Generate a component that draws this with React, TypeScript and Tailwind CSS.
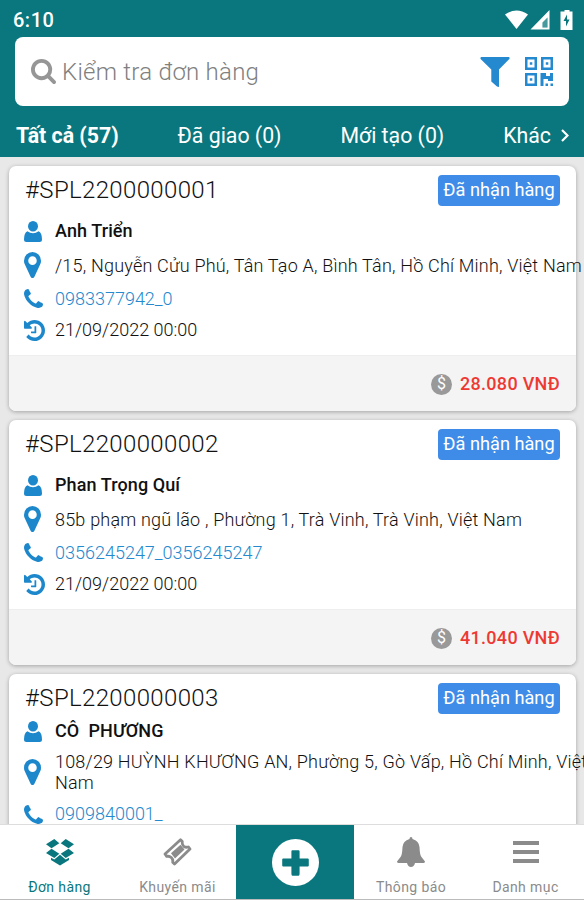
import type { ReactNode } from 'react'

type Order = {
  code: string
  name: string
  address: string
  phone: string
  time: string
  price: string
  compact?: boolean
}

const ORDERS: Order[] = [
  {
    code: '#SPL2200000001',
    name: 'Anh Triển',
    address: '/15, Nguyễn Cửu Phú, Tân Tạo A, Bình Tân, Hồ Chí Minh, Việt Nam',
    phone: '0983377942_0',
    time: '21/09/2022 00:00',
    price: '28.080 VNĐ',
  },
  {
    code: '#SPL2200000002',
    name: 'Phan Trọng Quí',
    address: '85b phạm ngũ lão , Phường 1, Trà Vinh, Trà Vinh, Việt Nam',
    phone: '0356245247_0356245247',
    time: '21/09/2022 00:00',
    price: '41.040 VNĐ',
  },
  {
    code: '#SPL2200000003',
    name: 'CÔ  PHƯƠNG',
    address: '108/29 HUỲNH KHƯƠNG AN, Phường 5, Gò Vấp, Hồ Chí Minh, Việt\nNam',
    phone: '0909840001_',
    time: '',
    price: '',
    compact: true,
  },
]

// glyphs on a 1792 grid
const GLYPHS = {
  search:
    'M1216 832q0-185-131.5-316.5t-316.5-131.5-316.5 131.5-131.5 316.5 131.5 316.5 316.5 131.5 316.5-131.5 131.5-316.5zm512 832q0 52-38 90t-90 38q-54 0-90-38l-343-342q-179 124-399 124-143 0-273.5-55.5t-225-150-150-225-55.5-273.5 55.5-273.5 150-225 225-150 273.5-55.5 273.5 55.5 225 150 150 225 55.5 273.5q0 220-124 399l343 343q37 37 37 90z',
  marker:
    'M1152 640q0-106-75-181t-181-75-181 75-75 181 75 181 181 75 181-75 75-181zm256 0q0 109-33 179l-364 774q-16 33-47.5 52t-67.5 19-67.5-19-46.5-52l-365-774q-33-70-33-179 0-212 150-362t362-150 362 150 150 362z',
  phone:
    'M1600 1240q0 27-10 70.5t-21 68.5q-21 50-122 106-94 51-186 51-27 0-53-3.5t-57.5-12.5-47-14.5-55.5-20.5-49-18q-98-35-175-83-127-79-264-216t-216-264q-48-77-83-175-3-9-18-49t-20.5-55.5-14.5-47-12.5-57.5-3.5-53q0-92 51-186 56-101 106-122 25-11 68.5-21t70.5-10q14 0 21 3 18 6 53 76 11 19 30 54t35 63.5 31 53.5q3 4 17.5 25t21.5 35.5 7 28.5q0 20-28.5 50t-62 55-62 53-28.5 46q0 9 5 22.5t8.5 20.5 14 24 11.5 19q76 137 174 235t235 174q2 1 19 11.5t24 14 20.5 8.500 22.500 5q18 0 46-28.5t53-62 55-62 50-28.5q14 0 28.5 7t35.5 21.500 25 17.500q25 15 53.5 31t63.5 35 54 30q70 35 76 53 3 7 3 21z',
  history:
    'M1664 896q0 156-61 298t-164 245-245 164-298 61q-172 0-327-72.5t-264-204.5q-7-10-6.5-22.5t8.5-20.5l137-138q10-9 25-9 16 2 23 12 73 95 179 147t225 52q104 0 198.5-40.5t163.5-109.5 109.5-163.5 40.5-198.5-40.5-198.5-109.5-163.5-163.5-109.5-198.5-40.5q-98 0-188 35.5t-160 101.5l137 138q31 30 14 69-17 40-59 40h-448q-26 0-45-19t-19-45v-448q0-42 40-59 39-17 69 14l130 129q107-101 244.5-156.5t284.5-55.5q156 0 298 61t245 164 164 245 61 298zm-640-288v448q0 14-9 23t-23 9h-320q-14 0-23-9t-9-23v-64q0-14 9-23t23-9h224v-352q0-14 9-23t23-9h64q14 0 23 9t9 23z',
}

// viewBox of each glyph's ink, so that the class sets the drawn size
const BOXES = {
  search: '64 128 1664 1664',
  marker: '384 128 1024 1536',
  phone: '192 128 1408 1408',
  history: '128 128 1536 1536',
}

function Glyph({ name, className }: { name: keyof typeof GLYPHS; className: string }) {
  return (
    <svg viewBox={BOXES[name]} preserveAspectRatio="none" className={className} fill="currentColor">
      <path d={GLYPHS[name]} />
    </svg>
  )
}

function UserIcon() {
  return (
    <svg width="18" height="21" viewBox="0 0 18 21" fill="currentColor">
      <ellipse cx="9" cy="5.200" rx="5" ry="5.200" />
      <path d="M3.500 10.200Q6 12.300 9 12.300Q12 12.300 14.500 10.200Q18 11.500 18 18.500Q18 21 15.500 21H2.500Q0 21 0 18.500Q0 11.500 3.500 10.200z" />
    </svg>
  )
}

function StatusBar() {
  return (
    <div className="flex h-[37px] items-center justify-between pt-[2px] pr-[11px] pl-[13px]">
      <span className="text-[20px] leading-none font-medium tracking-[0.5px]">6:10</span>
      <svg width="68" height="20" viewBox="0 0 68 20" fill="#fff">
        <path d="M0 4.500Q11.500 -3.500 23 4.500L11.500 19z" />
        <path fillRule="evenodd" d="M44.500 0V19.500H25.500zM42.500 7.500L37.500 12.500V17.500H42.500z" />
        <path d="M42.500 7.500L37.500 12.500V17.500H42.500z" fill="#fff" fillOpacity="0.25" />
        <path fillRule="evenodd" d="M59.500 0H64.500V1.500H67.500V20H55.500V1.500H59.500zM62 4.500L58.500 11H61V16.500L64.500 9.500H62z" />
      </svg>
    </div>
  )
}

function SearchBox() {
  return (
    <div className="mx-[15px] flex h-[69px] items-center rounded-[8px] bg-white pr-[15px] pl-[16px]">
      <Glyph name="search" className="size-[25px] text-[#969696]" />
      <span className="ml-[6px] flex-1 text-[24px] leading-none font-light tracking-[0.25px] text-[#808080]">
        Kiểm tra đơn hàng
      </span>
      <svg width="30" height="30" viewBox="0 0 30 30" fill="#2489ce">
        <path d="M1 0H29Q30 1 29.300 2L19 12.500V30L17 29.500L11.300 24.500V12.500L0.600 2Q0 1 1 0z" />
      </svg>
      <svg width="30" height="29" viewBox="0 0 30 29" className="ml-[14px]" fill="#2489ce">
        <path
          fillRule="evenodd"
          d="M1 0H13V13H1zM3.500 2.500V10.500H10.500V2.500zM17 0H29V13H17zM19.500 2.500V10.500H26.500V2.500zM1 16H13V29H1zM3.500 18.500V26.500H10.500V18.500z"
        />
        <path d="M5.800 5.300H8.300V7.800H5.800zM21.800 5.300H24.300V7.800H21.800zM5.800 21.300H8.300V23.800H5.800zM16.500 16H22V19H26V16H29V24H24V22H19.500V29H16.500zM21.500 26.500H24V29H21.500zM26.500 26.500H29V29H26.500z" />
      </svg>
    </div>
  )
}

function Tabs() {
  return (
    <div className="flex h-[51px] items-center justify-between pt-[9px] pr-[15px] pl-[16px] text-[21.3px] leading-none">
      <span className="font-bold">Tất cả (57)</span>
      <span>Đã giao (0)</span>
      <span>Mới tạo (0)</span>
      <span className="flex items-center gap-[10px]">
        Khác
        <svg width="8" height="13" viewBox="0 0 8 13" fill="none" stroke="#fff" strokeWidth="2.200">
          <path d="M1 1L6.500 6.500L1 12" />
        </svg>
      </span>
    </div>
  )
}

function Row({ icon, className, children }: { icon: ReactNode; className: string; children: ReactNode }) {
  return (
    <div className={`flex items-center ${className}`}>
      <span className="flex w-[31px] shrink-0">{icon}</span>
      {children}
    </div>
  )
}

function OrderCard({ order }: { order: Order }) {
  return (
    <article className="h-[245px] shrink-0 rounded-[7px] bg-white shadow-[0_1px_4px_rgba(0,0,0,0.3)]">
      <div className="h-[189px] pl-[15px]">
        <div className="flex h-[48px] items-center justify-between pr-[16px]">
          <h2 className="ml-[1px] text-[24px] leading-none font-light tracking-[0.35px] text-[#111]">{order.code}</h2>
          <span className="flex h-[31px] w-[122px] items-center justify-center rounded-[4px] bg-[#3f8ce8] text-[18.2px] leading-none whitespace-nowrap text-white">
            Đã nhận hàng
          </span>
        </div>
        <Row className={order.compact ? 'h-[18px]' : 'h-[34px]'} icon={<UserIcon />}>
          <span className="text-[18px] leading-none font-medium tracking-[0.1px] whitespace-pre text-[#111]">
            {order.name}
          </span>
        </Row>
        <Row
          className={order.compact ? 'h-[64px]' : 'h-[34px]'}
          icon={<Glyph name="marker" className="h-[26px] w-[17px]" />}
        >
          <span className="text-[18px] leading-[21px] font-light tracking-[0.2px] whitespace-pre text-[#111]">
            {order.address}
          </span>
        </Row>
        <Row className={order.compact ? 'h-[20px]' : 'h-[33px]'} icon={<Glyph name="phone" className="size-[19px]" />}>
          <span className="text-[18px] leading-none font-light text-[#2489ce]">{order.phone}</span>
        </Row>
        {order.time && (
          <Row className="h-[30px]" icon={<Glyph name="history" className="size-[21px]" />}>
            <span className="text-[18px] leading-none font-light text-[#111]">{order.time}</span>
          </Row>
        )}
      </div>
      {order.price && (
        <div className="flex h-[56px] items-center justify-end rounded-b-[7px] border-t border-[#eee] bg-[#f4f4f4] pt-[1px] pr-[16px]">
          <span className="flex size-[21px] items-center justify-center rounded-full bg-[#999] text-[16px] leading-none text-white">
            $
          </span>
          <span className="ml-[8px] text-[18px] leading-none font-medium tracking-[0.3px] text-[#ee3933]">
            {order.price}
          </span>
        </div>
      )}
    </article>
  )
}

function NavItem({ label, className, children }: { label: string; className: string; children: ReactNode }) {
  return (
    <div className={`flex flex-col items-center ${className}`}>
      <div className="flex h-[54px] items-center">{children}</div>
      <span className="text-[14px] leading-[16px] tracking-[0.4px]">{label}</span>
    </div>
  )
}

function BottomNav() {
  return (
    <nav className="flex h-[76px] shrink-0 border-t border-b border-t-[#ddd] border-b-[#bbb] bg-white text-[#8b8b8b]">
      <NavItem label="Đơn hàng" className="w-[119px] text-[#09777d]">
        <svg width="28" height="27" viewBox="0 0 28 27" fill="currentColor">
          <path d="M8.300 0L13.300 4.300L5.500 9.300L0 5.200zM19.700 0L14.700 4.300L22.500 9.300L28 5.200zM0 14L5.500 9.800L13.300 14.700L8.300 19zM28 14L22.500 9.800L14.700 14.700L19.700 19zM14 15.800L19.700 20.500L23 18.700V21L14 26.500L5 21V18.700L8.300 20.500z" />
        </svg>
      </NavItem>
      <NavItem label="Khuyến mãi" className="w-[117px]">
        <svg
          width="29"
          height="28"
          viewBox="0 0 29 28"
          fill="none"
          stroke="currentColor"
          strokeWidth="2.800"
          strokeLinejoin="round"
        >
          <path d="M2 16L17.500 1.800L19.300 3.600Q18.800 6.500 20.800 8.300Q22.800 9.800 25.500 9L27 11L11.500 26L9.700 24.200Q10.200 21.300 8.300 19.500Q6.300 17.800 3.700 18.400z" />
          <path d="M8 15.300L17.500 6.700L21.500 11.500L12 20.500z" fill="currentColor" stroke="none" />
        </svg>
      </NavItem>
      <div className="flex w-[118px] items-center justify-center bg-[#09777d]">
        <svg width="47" height="47" viewBox="0 0 46 46">
          <circle cx="23" cy="23" r="23" fill="#fff" />
          <path d="M20 11H26Q27 11 27 12V19H35Q36 19 36 20V26Q36 27 35 27H27V34Q27 36 26 36H20Q19 36 19 34V27H11Q10 27 10 26V20Q10 19 11 19H19V12Q19 11 20 11z" fill="#09777d" />
        </svg>
      </div>
      <NavItem label="Thông báo" className="w-[114px]">
        <svg width="28" height="30" viewBox="0 0 28 30" fill="currentColor">
          <path d="M14 0Q15.500 0 15.500 2Q22 4 22.500 10Q22.800 18 24.500 20L28 24.500Q27.800 26 26.500 26H18Q17 30 14 30Q11 30 10 26H1.500Q0.200 26 0 24.500L3.500 20Q5.200 18 5.500 10Q6 4 12.500 2Q12.500 0 14 0z" />
        </svg>
      </NavItem>
      <NavItem label="Danh mục" className="w-[115px]">
        <svg width="26" height="22" viewBox="0 0 26 22" fill="currentColor">
          <path d="M0 0H26V4H0zM0 9H26V13H0zM0 18H26V22H0z" />
        </svg>
      </NavItem>
    </nav>
  )
}

export default function App() {
  return (
    <div className="flex h-[900px] w-[584px] flex-col overflow-hidden bg-[#e8e8e8] font-['Roboto',sans-serif]">
      <header className="h-[157px] shrink-0 bg-[#09777d] text-white">
        <StatusBar />
        <SearchBox />
        <Tabs />
      </header>
      <main className="flex min-h-0 flex-1 flex-col gap-[9px] overflow-hidden pt-[9px] pr-[8px] pl-[9px] text-[#1d87cb]">
        {ORDERS.map((order) => (
          <OrderCard key={order.code} order={order} />
        ))}
      </main>
      <BottomNav />
    </div>
  )
}
